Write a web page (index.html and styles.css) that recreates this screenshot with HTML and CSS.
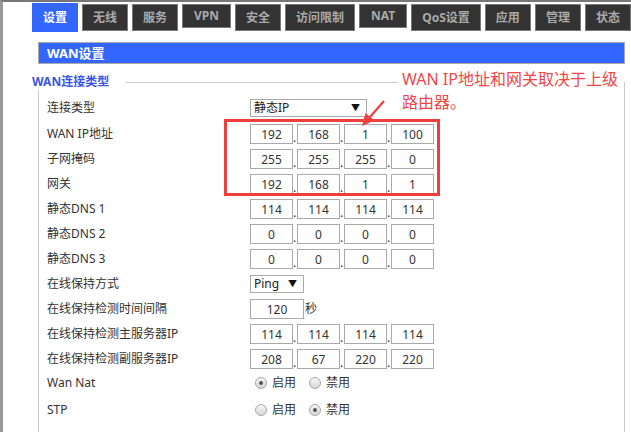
FILE: index.html
```html
<!DOCTYPE html>
<html lang="zh-CN">
<head>
    <meta charset="UTF-8">
    <meta name="viewport" content="width=device-width, initial-scale=1.0">
    <title>WAN设置</title>
    <link rel="stylesheet" href="styles.css">
</head>
<body>

<ul class="tabs">
    <li class="tab active">设置</li>
    <li class="tab">无线</li>
    <li class="tab">服务</li>
    <li class="tab short">VPN</li>
    <li class="tab">安全</li>
    <li class="tab">访问限制</li>
    <li class="tab short">NAT</li>
    <li class="tab">QoS设置</li>
    <li class="tab">应用</li>
    <li class="tab">管理</li>
    <li class="tab">状态</li>
</ul>

<div class="title-bar">WAN设置</div>

<fieldset class="group">
    <legend>WAN连接类型</legend>

    <div class="row">
        <label>连接类型</label>
        <div class="select wide"><span>静态IP</span><span class="caret">▼</span></div>
    </div>
    <div class="row">
        <label>WAN IP地址</label>
        <input class="ip" value="192"><span class="dot">.</span><input class="ip" value="168"><span class="dot">.</span><input class="ip" value="1"><span class="dot">.</span><input class="ip" value="100">
    </div>
    <div class="row">
        <label>子网掩码</label>
        <input class="ip" value="255"><span class="dot">.</span><input class="ip" value="255"><span class="dot">.</span><input class="ip" value="255"><span class="dot">.</span><input class="ip" value="0">
    </div>
    <div class="row">
        <label>网关</label>
        <input class="ip" value="192"><span class="dot">.</span><input class="ip" value="168"><span class="dot">.</span><input class="ip" value="1"><span class="dot">.</span><input class="ip" value="1">
    </div>
    <div class="row">
        <label>静态DNS 1</label>
        <input class="ip" value="114"><span class="dot">.</span><input class="ip" value="114"><span class="dot">.</span><input class="ip" value="114"><span class="dot">.</span><input class="ip" value="114">
    </div>
    <div class="row">
        <label>静态DNS 2</label>
        <input class="ip" value="0"><span class="dot">.</span><input class="ip" value="0"><span class="dot">.</span><input class="ip" value="0"><span class="dot">.</span><input class="ip" value="0">
    </div>
    <div class="row">
        <label>静态DNS 3</label>
        <input class="ip" value="0"><span class="dot">.</span><input class="ip" value="0"><span class="dot">.</span><input class="ip" value="0"><span class="dot">.</span><input class="ip" value="0">
    </div>
    <div class="row">
        <label>在线保持方式</label>
        <div class="select narrow"><span>Ping</span><span class="caret">▼</span></div>
    </div>
    <div class="row">
        <label>在线保持检测时间间隔</label>
        <input class="ip long" value="120"><span class="unit">秒</span>
    </div>
    <div class="row">
        <label>在线保持检测主服务器IP</label>
        <input class="ip" value="114"><span class="dot">.</span><input class="ip" value="114"><span class="dot">.</span><input class="ip" value="114"><span class="dot">.</span><input class="ip" value="114">
    </div>
    <div class="row">
        <label>在线保持检测副服务器IP</label>
        <input class="ip" value="208"><span class="dot">.</span><input class="ip" value="67"><span class="dot">.</span><input class="ip" value="220"><span class="dot">.</span><input class="ip" value="220">
    </div>
    <div class="row radio-row">
        <label>Wan Nat</label>
        <span class="radio checked"></span><span class="radio-text">启用</span>
        <span class="radio second"></span><span class="radio-text">禁用</span>
    </div>
    <div class="row radio-row">
        <label>STP</label>
        <span class="radio"></span><span class="radio-text">启用</span>
        <span class="radio second checked"></span><span class="radio-text">禁用</span>
    </div>
</fieldset>

<!-- annotation drawn over the form -->
<div class="note">WAN IP地址和网关取决于上级<br>路由器。</div>
<div class="mark"></div>
<svg class="pointer" width="36" height="36" viewBox="0 0 36 36">
    <line x1="29" y1="6" x2="15" y2="22" stroke="#ef4040" stroke-width="2.2"/>
    <polygon points="7,31 10.5,18 19.5,25.5" fill="#ef4040"/>
</svg>

</body>
</html>
```

FILE: styles.css
```css
html {
    overflow: hidden;
}

body {
    margin: 0;
    border-top: 2px solid #777;
    border-left: 3px solid #999;
    font-family: "Noto Sans", "Noto Sans CJK SC", sans-serif;
    font-size: 12px;
    color: #333;
    background: #fff;
}

.tabs {
    display: flex;
    align-items: flex-start;
    gap: 4px;
    list-style: none;
    margin: 0;
    padding: 1px 0 0 29px;
    white-space: nowrap;
}

.tab {
    flex: none;
    box-sizing: border-box;
    height: 27px;
    margin-top: 1px;
    padding: 0 10px;
    border: 1px solid #7a7a7a;
    background-color: #333;
    color: #aaa;
    font-weight: bold;
    line-height: 25px;
}

.tab.short {
    height: 24px;
    padding: 0 11px;
    line-height: 22px;
}

.tab.active {
    height: 29px;
    margin-top: 0;
    border-color: #3366ff;
    background-color: #3366ff;
    color: #fff;
    line-height: 27px;
}

.title-bar {
    box-sizing: border-box;
    height: 22px;
    margin: 10px 6px 0 35px;
    padding-left: 8px;
    border: 1px solid #aaa;
    background-color: #3366ff;
    color: #fff;
    font-size: 13px;
    font-weight: bold;
    line-height: 20px;
}

.group {
    margin: 10px 6px 0 35px;
    padding: 9px 0 40px 8px;
    border: 1px solid #ccc;
    min-width: 0;
}

.group legend {
    margin-left: -15px;
    padding: 0 17px 0 0;
    background-color: #fff;
    color: #3a55e8;
    font-weight: bold;
    line-height: 16px;
}

.row {
    display: flex;
    align-items: flex-start;
    height: 25px;
}

.row label {
    flex: none;
    width: 203px;
    line-height: 20px;
}

.row:first-of-type label {
    line-height: 18px;
}

.ip {
    box-sizing: border-box;
    width: 43px;
    height: 20px;
    margin: 0;
    padding: 0;
    border: 1px solid #aaa;
    font-family: inherit;
    font-size: 12px;
    color: #333;
    text-align: center;
}

.ip.long {
    width: 54px;
}

.dot {
    align-self: flex-end;
    width: 4px;
    height: 12px;
    line-height: 12px;
    margin-bottom: 5px;
}

.unit {
    margin-left: 1px;
    line-height: 20px;
}

.select {
    display: flex;
    justify-content: space-between;
    align-items: center;
    box-sizing: border-box;
    height: 18px;
    padding: 0 6px 0 3px;
    border: 1px solid #a9a9a9;
    background-color: #fff;
    color: #222;
    line-height: 16px;
}

.select.wide {
    width: 117px;
}

.select.narrow {
    width: 54px;
    margin-top: 1px;
}

.caret {
    font-size: 9px;
    color: #111;
}

.radio-row {
    align-items: center;
    height: 18px;
    margin-bottom: 9px;
}

.radio-row label {
    line-height: 18px;
}

.radio {
    position: relative;
    box-sizing: border-box;
    width: 12px;
    height: 12px;
    margin-left: 5px;
    border: 1px solid #a6a6a6;
    border-radius: 50%;
    background: linear-gradient(#f6f6f6, #d6d6d6);
}

.radio.second {
    margin-left: 13px;
}

.radio.checked::after {
    content: "";
    position: absolute;
    left: 3px;
    top: 3px;
    width: 4px;
    height: 4px;
    border-radius: 50%;
    background-color: #555;
}

.radio-text {
    margin-left: 5px;
    line-height: 18px;
}

.note {
    position: absolute;
    left: 398px;
    top: 68px;
    width: 222px;
    padding-left: 4px;
    background-color: #fff;
    color: #f04848;
    font-size: 16px;
    line-height: 23px;
    white-space: nowrap;
}

.mark {
    position: absolute;
    left: 224px;
    top: 119px;
    box-sizing: border-box;
    width: 216px;
    height: 77px;
    border: 3px solid #ef3e3e;
}

.pointer {
    position: absolute;
    left: 355px;
    top: 95px;
}
```
